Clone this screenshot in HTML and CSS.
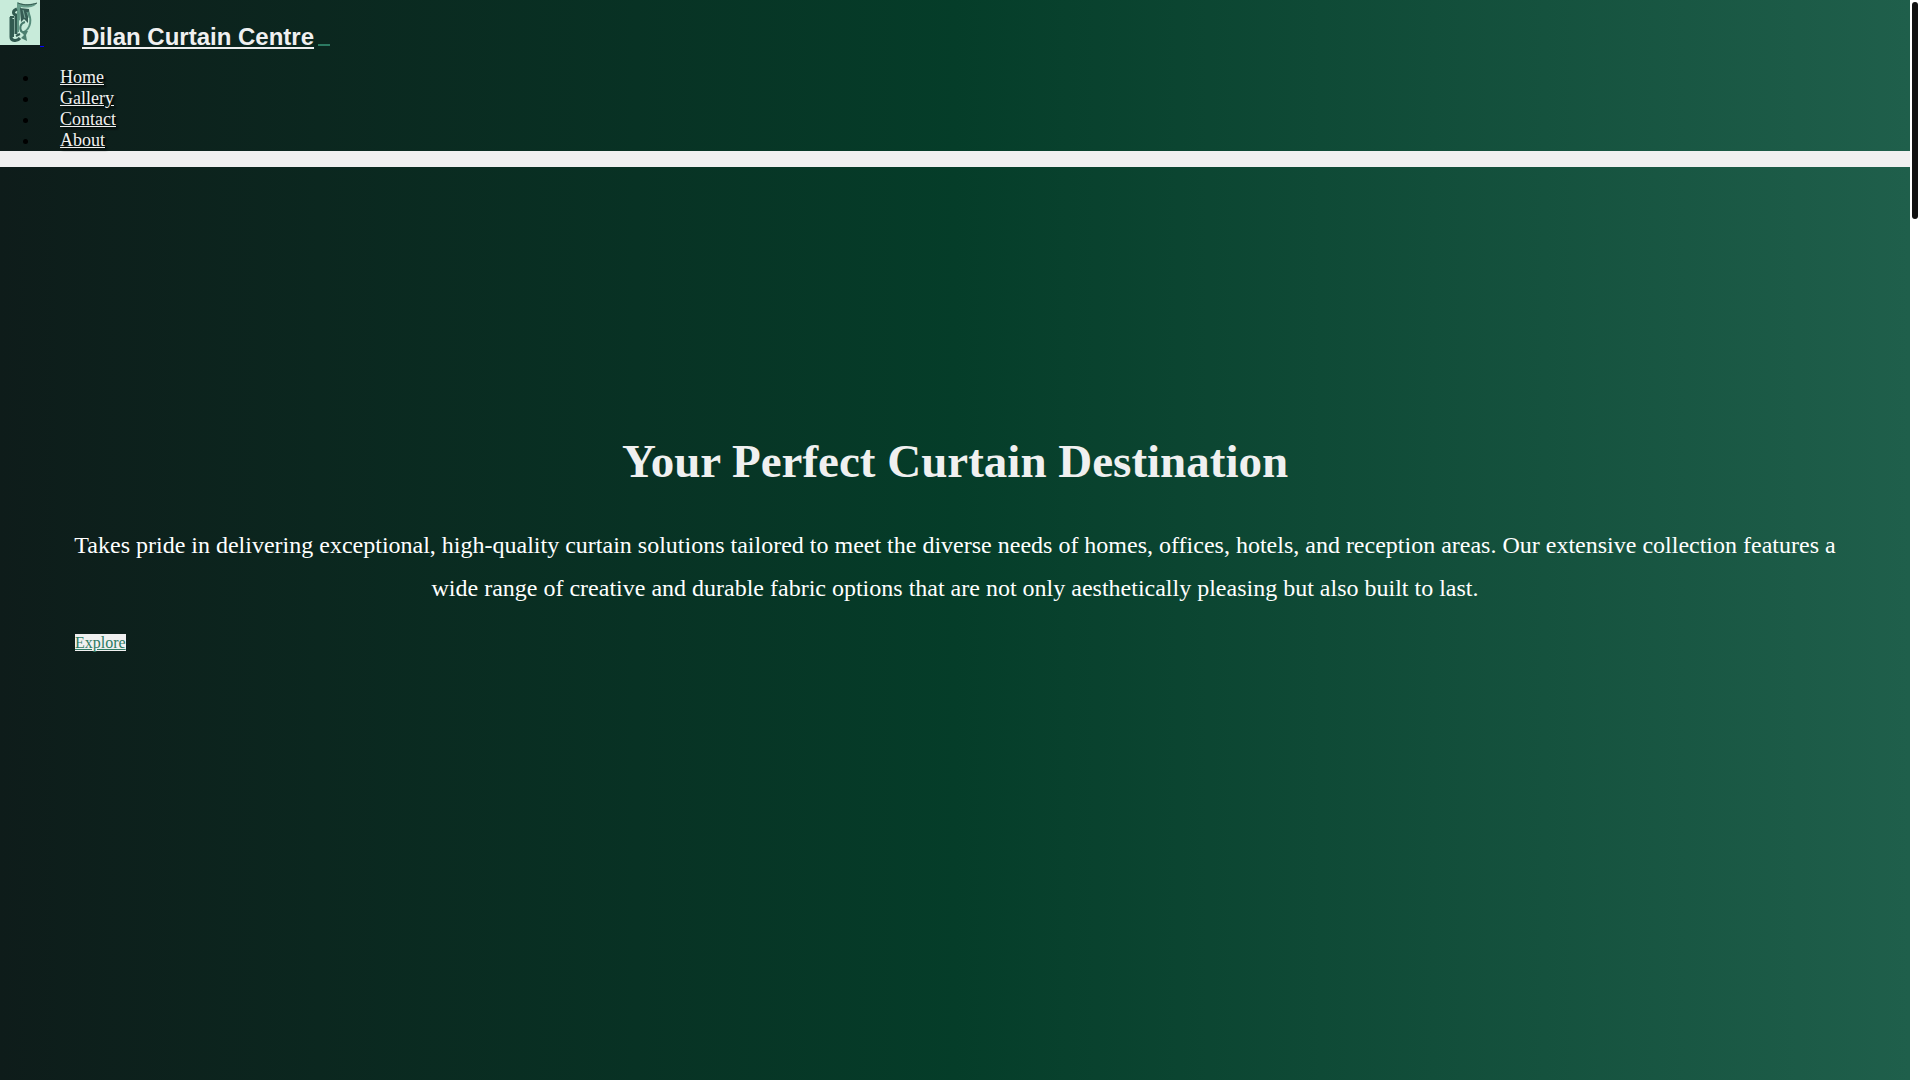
FILE: index.html
```html
<!DOCTYPE html>
<html lang="en">
<head>
<meta charset="utf-8">
<title>Dilan Curtain Centre</title>
<link rel="stylesheet" href="styles.css">
</head>
<body>
<header class="site-header">
  <div class="brand-row">
    <a class="logo" href="#home" aria-label="Home">
      <svg width="40" height="45" viewBox="0 0 40 45" aria-hidden="true">
        <rect width="40" height="45" fill="#c8ebda"/>
        <path d="M17 2C22 5 31 4 37 3C34 8 27 8 21 7L20 20L17 22Z" fill="#679d8b"/>
        <path d="M18 3C25 6 31 5 37 3" fill="none" stroke="#36594f" stroke-width="1"/>
        <path d="M20 8L29 9L30 18L28 16L28 23L24 19L21 22Z" fill="#365c54"/>
        <path d="M23 10L25 18M27 12L29 18" stroke="#7cac9c" stroke-width="1"/>
        <path d="M28 12C32 19 31 28 24 32" fill="none" stroke="#568c7b" stroke-width="2"/>
        <path d="M17 9C12 11 13 14 16 15L16 34M11 17L11 37C11 41 17 42 20 38" fill="none" stroke="#315a50" stroke-width="3"/>
        <path d="M10 17L14 17M13 19L13 37M16 36L20 34" fill="none" stroke="#315a50" stroke-width="2"/>
        <path d="M18 12L18 32" stroke="#5f9583" stroke-width="2"/>
        <path d="M25 22C20 23 19 29 22 32" fill="none" stroke="#477a6c" stroke-width="2"/>
        <path d="M20 31L28 31L26 35L27 41L21 38L24 35Z" fill="#4d8070"/>
      </svg>
      <span class="logo-line"></span>
    </a>
    <a class="brand" href="#home">Dilan Curtain Centre</a>
    <span class="brand-line"></span>
  </div>
  <nav>
    <ul class="menu">
      <li><a href="#home">Home</a></li>
      <li><a href="#gallery">Gallery</a></li>
      <li><a href="#contact">Contact</a></li>
      <li><a href="#about">About</a></li>
    </ul>
  </nav>
</header>
<main class="hero">
  <h1>Your Perfect Curtain Destination</h1>
  <p>Takes pride in delivering exceptional, high-quality curtain solutions tailored to meet the diverse needs of homes, offices, hotels, and reception areas. Our extensive collection features a wide range of creative and durable fabric options that are not only aesthetically pleasing but also built to last.</p>
  <a class="explore" href="#gallery">Explore</a>
</main>
<div class="scroll-track" aria-hidden="true"><div class="scroll-thumb"></div></div>
</body>
</html>
```
FILE: styles.css
```css
* { box-sizing: border-box; }
html { background: #fff; }
body {
  display: flex;
  flex-direction: column;
  gap: 16px;
  min-height: 100vh;
  margin: 0;
  padding-right: 10px;
  background: #f0f0f0;
  font-family: "Liberation Serif", "Times New Roman", serif;
  font-size: 16px;
}
.site-header, .hero {
  background: linear-gradient(to right, #0e1c1a, #053d29, #1f5f4b);
}
.brand-row {
  display: flex;
  align-items: flex-start;
  height: 67px;
}
.logo { display: flex; align-items: flex-end; height: 47px; margin-right: 38px; }
.logo svg { display: block; align-self: flex-start; }
.logo-line { width: 4px; height: 1px; background: #00f; }
.brand {
  padding-top: 23px;
  color: #f0f0f0;
  font: bold 24px/28px "Liberation Sans", Arial, sans-serif;
}
.brand-line { width: 12px; height: 2px; margin: 44px 0 0 4px; background: #2c7a62; }
.menu {
  margin: 0;
  padding-left: 40px;
  font-size: 18px;
  line-height: 21px;
}
.menu a {
  margin-left: 20px;
  color: #f0f0f0;
  text-shadow: 2px 2px 2px #000;
}
.hero {
  flex: 1;
  padding: 265px 60px 0;
  color: #f0f0f0;
}
.hero h1 {
  margin: 0;
  font-size: 47px;
  line-height: 58px;
  text-align: center;
}
.hero p {
  margin: 34px 0 24px;
  color: #fff;
  font-size: 24px;
  line-height: 43px;
  text-align: center;
}
.explore {
  margin-left: 15px;
  background: #f0f0f0;
  color: #2c7a62;
}
.scroll-track {
  position: fixed;
  inset: 0 0 0 auto;
  width: 10px;
  padding: 2px;
  background: #fff;
}
.scroll-thumb { width: 6px; height: 217px; border-radius: 3px; background: #111; }
```
